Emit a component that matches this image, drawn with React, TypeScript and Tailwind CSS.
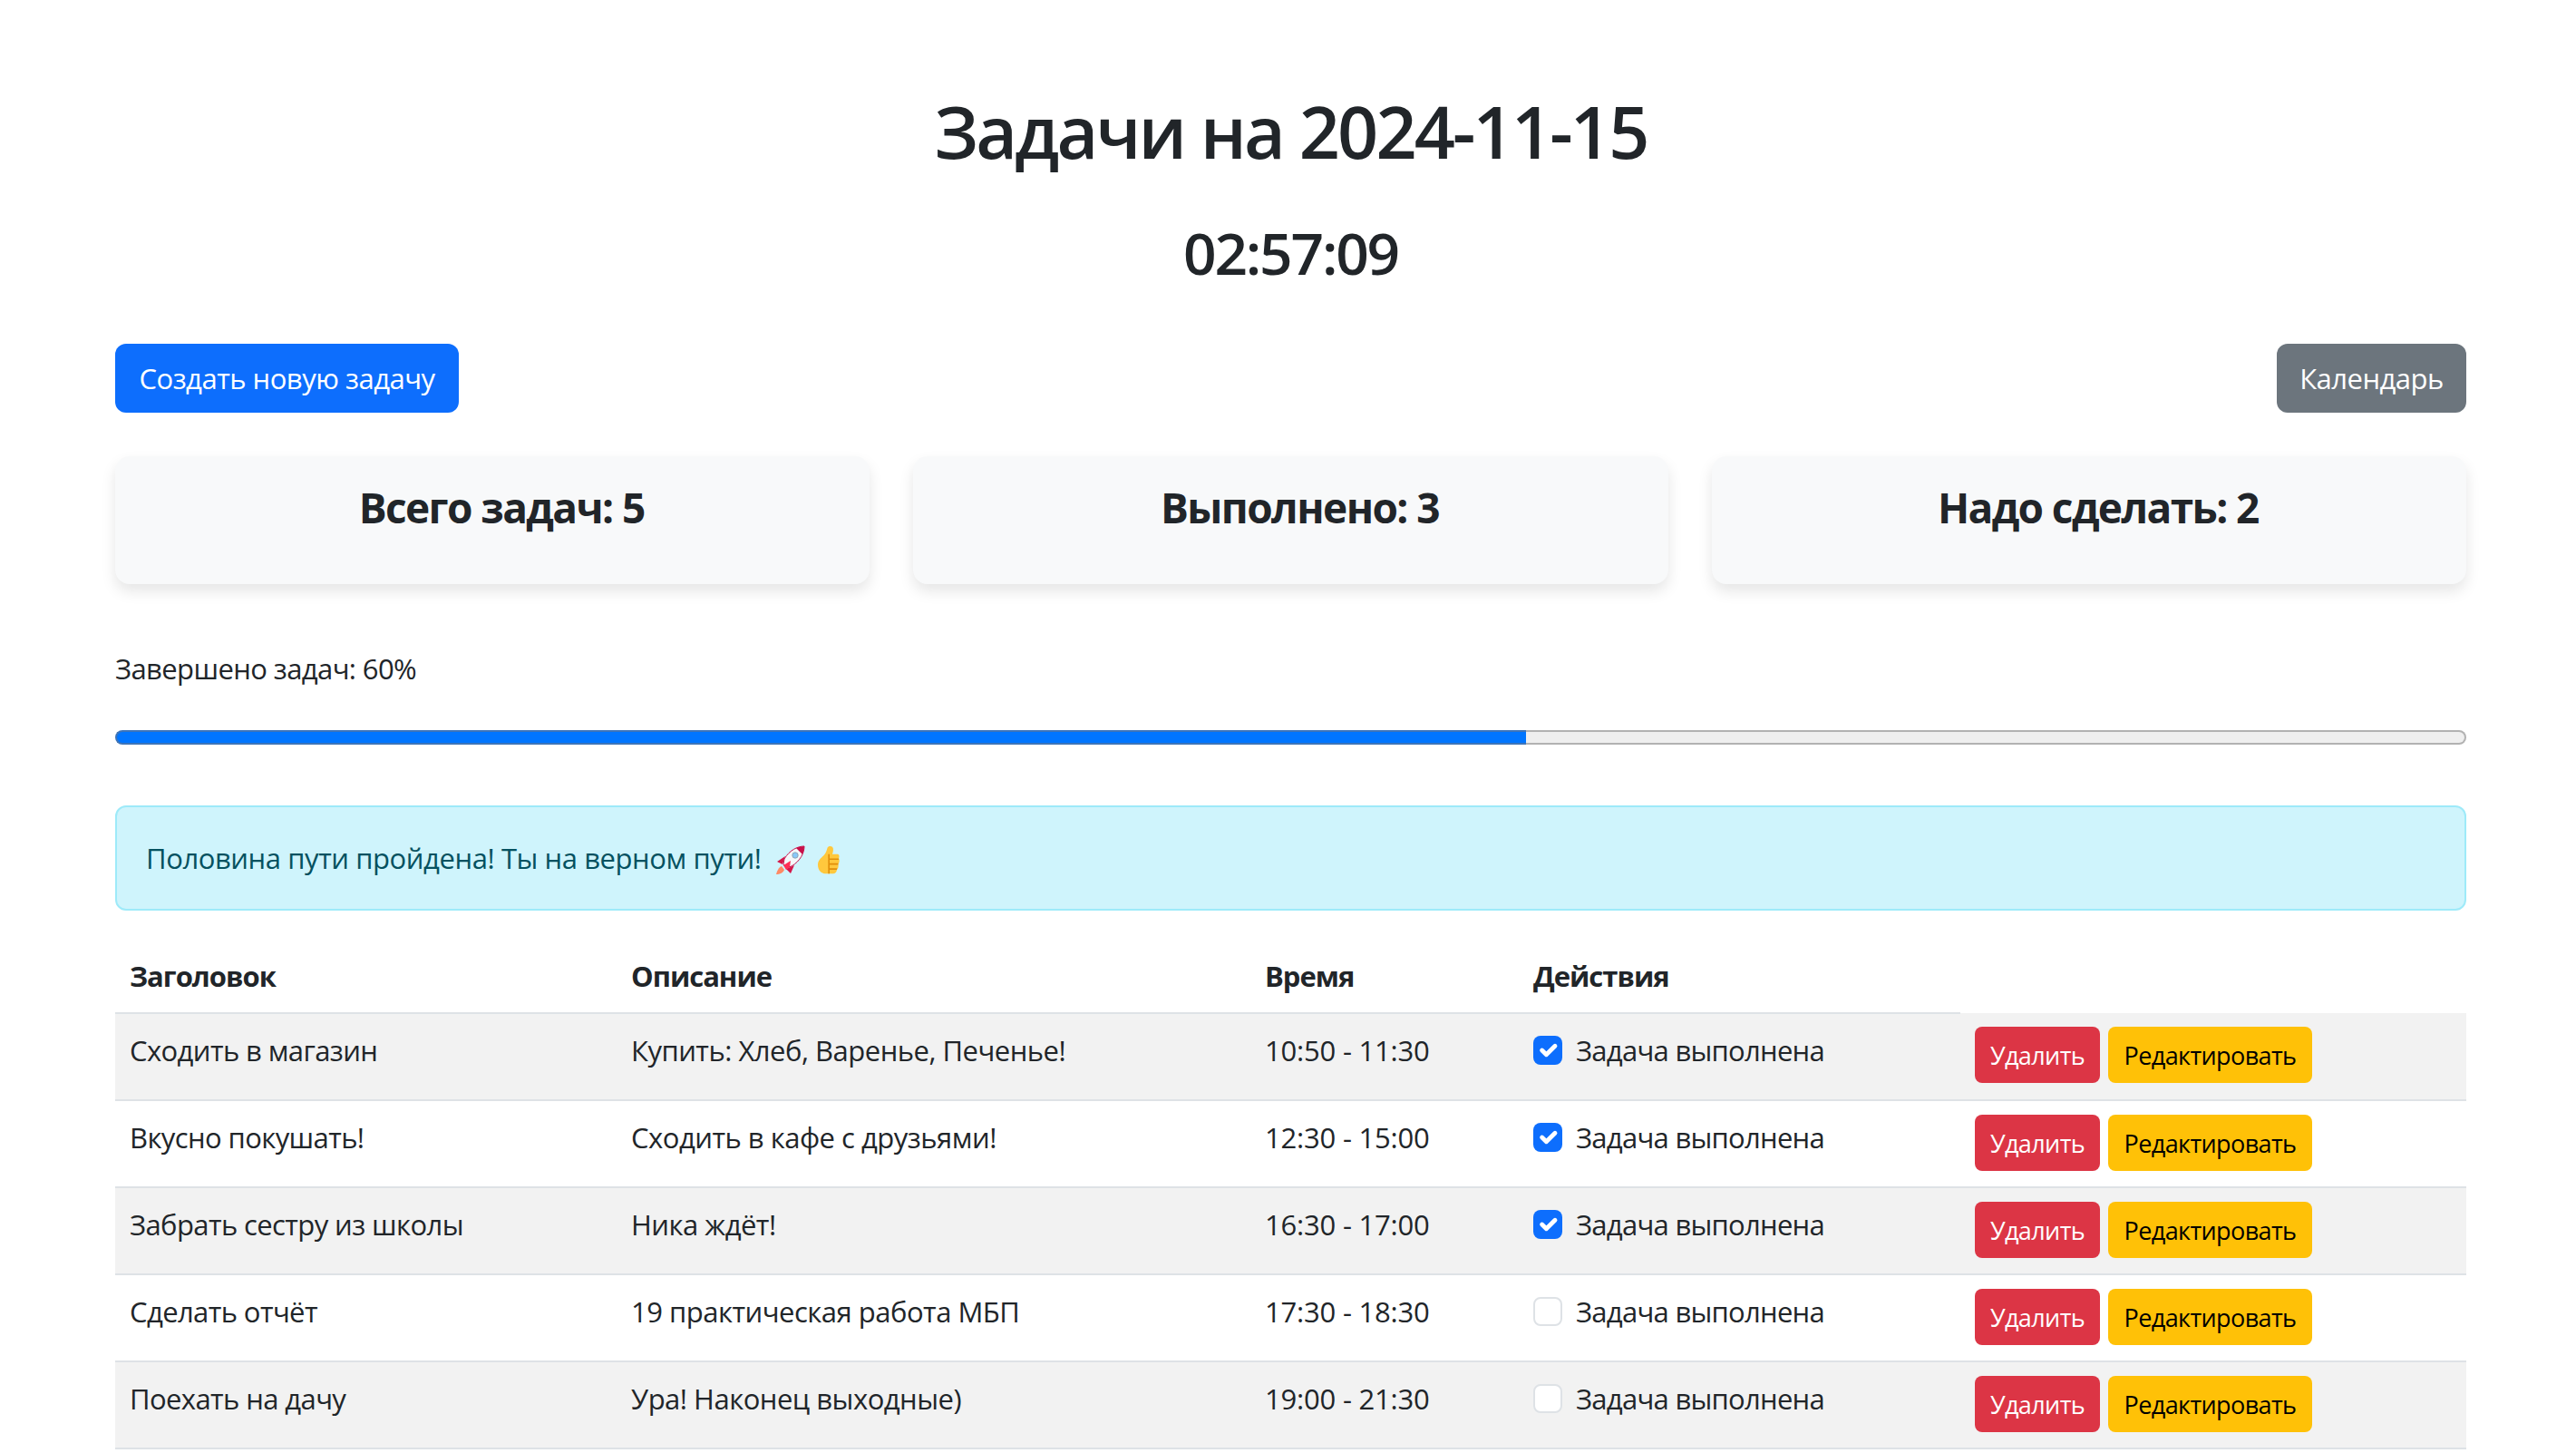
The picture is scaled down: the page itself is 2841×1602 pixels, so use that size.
import React from "react";

const font = "font-['Open_Sans','Noto_Sans',sans-serif]";

const tasks = [
    { title: "Сходить в магазин", text: "Купить: Хлеб, Варенье, Печенье!", time: "10:50 - 11:30", done: true },
    { title: "Вкусно покушать!", text: "Сходить в кафе с друзьями!", time: "12:30 - 15:00", done: true },
    { title: "Забрать сестру из школы", text: "Ника ждёт!", time: "16:30 - 17:00", done: true },
    { title: "Сделать отчёт", text: "19 практическая работа МБП", time: "17:30 - 18:30", done: false },
    { title: "Поехать на дачу", text: "Ура! Наконец выходные)", time: "19:00 - 21:30", done: false },
];

const Rocket = () => (
    <svg viewBox="0 0 32 32" className="inline-block w-[32px] h-[32px] align-[-6px] ml-[9px]">
        <path fill="#FF8A65" d="M6 23C3 24 1 28 0 32c4 0 8-2 9-5z" />
        <path fill="#D4174A" d="M10 12L1 18l6 3zM20 22l-4 9-5-5z" />
        <path fill="#F5F8FA" stroke="#C8104A" strokeWidth="1" d="M31 1C24 1 15 5 9 15l-1 6 3 4 6-2C27 17 31 8 31 1z" />
        <path fill="#C8104A" d="M31 1c-4 0-7 1-9 2l7 7c1-2 2-6 2-9z" />
        <path fill="#FF2D55" d="M8 22l8-5-1 7-4 3z" />
        <circle cx="21" cy="11" r="3.2" fill="#88C9F9" stroke="#8899A6" strokeWidth="0.8" />
    </svg>
);

const Thumb = () => (
    <svg viewBox="0 0 75 95" className="inline-block w-[24px] h-[32px] align-[-6px] ml-[14px]">
        <path fill="#FFC83D" d="M0 65C0 50 10 42 20 33c8-8 10-18 13-27 2-6 12-7 17-3 5 5 3 15 0 25h18c6 0 7 10 4 14 3 5 3 16-2 20 2 8 0 16-4 18-1 10-6 15-14 15H25C10 95 0 82 0 65z" />
        <path fill="none" stroke="#E08E0B" strokeWidth="5" d="M38 28v67M38 45h34M38 62h32M38 79h28" />
    </svg>
);

const Check = ({ done }: { done: boolean }) =>
    done ? (
        <span className="inline-flex items-center justify-center w-[32px] h-[32px] rounded-[8px] bg-[#0d6efd] shrink-0">
            <svg viewBox="0 0 20 20" className="w-[32px] h-[32px]">
                <path fill="none" stroke="#fff" strokeLinecap="round" strokeLinejoin="round" strokeWidth="3" d="M6 10l3 3l6-6" />
            </svg>
        </span>
    ) : (
        <span className="inline-block w-[32px] h-[32px] rounded-[8px] bg-white border-2 border-[#dee2e6] shrink-0" />
    );

const StatCard = ({ label }: { label: string }) => (
    <div className="h-[141px] rounded-[16px] bg-[#f8f9fa] pt-[27px] pl-[20px] text-center shadow-[0_8px_16px_rgba(0,0,0,0.1)]">
        <h4 className="text-[46px] leading-[58px] font-bold tracking-[-1.6px]">{label}</h4>
    </div>
);

export default function App() {
    return (
        <div className={`${font} bg-white text-[#212529] text-[31px] leading-[48px] tracking-[-0.6px]`}>
            <div className="w-[2593px] ml-[127px] pt-[97px]">
                <h1 className="text-[79px] leading-[96px] font-semibold text-center tracking-[-2.85px]">Задачи на 2024-11-15</h1>
                <h2 className="mt-[48px] text-[64px] leading-[76px] font-semibold text-center tracking-[-2.2px]">02:57:09</h2>

                <div className="flex justify-between mt-[62px] tracking-[-0.5px]">
                    <button className="h-[76px] w-[379px] rounded-[12px] bg-[#0d6efd] text-white">Создать новую задачу</button>
                    <button className="h-[76px] w-[209px] rounded-[12px] bg-[#6c757d] text-white">Календарь</button>
                </div>

                <div className="grid grid-cols-3 gap-[48px] mt-[48px]">
                    <StatCard label="Всего задач: 5" />
                    <StatCard label="Выполнено: 3" />
                    <StatCard label="Надо сделать: 2" />
                </div>

                <p className="mt-[69px]">Завершено задач: 60%</p>

                <div className="flex mt-[44px] h-[16px]">
                    <div className="w-[60%] rounded-l-[8px] bg-[#0075ff] border-y-2 border-l-2 border-[#3d74b8]" />
                    <div className="flex-1 rounded-r-[8px] bg-[#efefef] border-y-2 border-r-2 border-[#b2b2b2]" />
                </div>

                <div className="mt-[67px] h-[116px] flex items-center rounded-[12px] bg-[#cff4fc] border-2 border-[#9eeaf9] px-[32px] text-[#055160] tracking-[-0.42px]">
                    <span>Половина пути пройдена! Ты на верном пути! <Rocket /><Thumb /></span>
                </div>

                <table className="w-full mt-[32px] border-collapse table-fixed">
                    <thead>
                        <tr className="tracking-[-1px]">
                            <th className="w-[553px] h-[81px] px-[16px] text-left font-bold border-b-2 border-[#dee2e6]">Заголовок</th>
                            <th className="w-[699px] px-[16px] text-left font-bold border-b-2 border-[#dee2e6]">Описание</th>
                            <th className="w-[296px] px-[16px] text-left font-bold border-b-2 border-[#dee2e6]">Время</th>
                            <th className="w-[487px] px-[16px] text-left font-bold border-b-2 border-[#dee2e6]">Действия</th>
                        </tr>
                    </thead>
                    <tbody>
                        {tasks.map((task, i) => (
                            <tr key={task.title} className={`h-[95.75px] border-b-2 border-[#dee2e6] ${i % 2 === 0 ? "bg-[#f2f2f2]" : "bg-white"}`}>
                                <td className="px-[16px] pt-[16px] pb-[30px] align-top">{task.title}</td>
                                <td className="px-[16px] pt-[16px] pb-[30px] align-top tracking-[-0.5px]">{task.text}</td>
                                <td className="px-[16px] pt-[16px] pb-[30px] align-top tracking-[-0.2px]">{task.time}</td>
                                <td className="px-[16px] pt-[16px] pb-[30px] align-top tracking-[-0.72px]">
                                    <div className="flex items-center gap-[15px]">
                                        <Check done={task.done} />
                                        <span>Задача выполнена</span>
                                    </div>
                                </td>
                                <td className="px-[16px] pt-[15px] align-top">
                                    <div className="flex gap-[9px] text-[27px] leading-[42px] tracking-[-0.6px]">
                                        <button className="h-[62px] w-[138px] pt-[2px] rounded-[8px] bg-[#dc3545] text-white">Удалить</button>
                                        <button className="h-[62px] w-[225px] pt-[2px] rounded-[8px] bg-[#ffc107] text-black">Редактировать</button>
                                    </div>
                                </td>
                            </tr>
                        ))}
                    </tbody>
                </table>
            </div>
        </div>
    );
}
